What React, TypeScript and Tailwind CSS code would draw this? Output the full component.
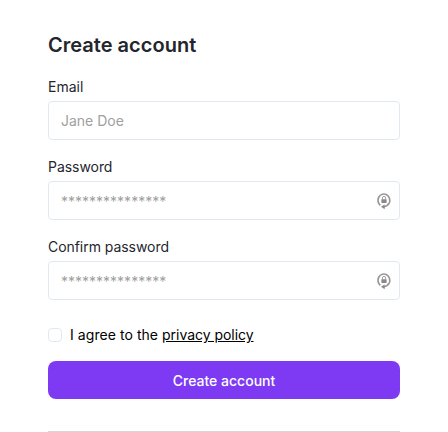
import React from "react";

function KeeperIcon() {
  return (
    <svg viewBox="0 0 16 18" className="h-[18px] w-4" fill="none">
      <path d="M4.4 13.4A5.9 6.3 0 1 1 13.3 10.8Q12 13.8 7.6 14.8" stroke="#999999" strokeWidth="1.7" />
      <path d="M8.6 12.4v4.8L5 14.8z" fill="#8a8a8a" />
      <path d="M6.4 7.4V6a1.6 1.6 0 0 1 3.2 0v1.4" stroke="#a0a0a0" strokeWidth="1" />
      <rect x="5.4" y="7.2" width="5.2" height="3.8" rx="0.4" fill="#888888" />
    </svg>
  );
}

type FieldProps = {
  label: string;
  type: string;
  placeholder: string;
  icon?: boolean;
};

function Field({ label, type, placeholder, icon }: FieldProps) {
  return (
    <label className="block text-[14px] leading-[21px] text-[#24262d]">
      <span className={icon ? "block tracking-[-0.05px]" : "block"}>{label}</span>
      <span className="mt-1 flex h-[39px] items-center rounded-[4px] border border-[#e2e8f0] bg-white pl-3 pr-[7px]">
        <input
          type={type}
          placeholder={placeholder}
          className={
            icon
              ? "min-w-0 flex-1 bg-transparent pt-0.5 leading-[21px] outline-none placeholder:text-[#a0a0a0]"
              : "min-w-0 flex-1 bg-transparent leading-[21px] outline-none placeholder:text-[#a0a0a0]"
          }
        />
        {icon && <KeeperIcon />}
      </span>
    </label>
  );
}

export default function App() {
  return (
    <main className="h-[432px] overflow-hidden bg-white px-12 pt-8 font-['Inter',sans-serif]">
      <h1 className="mb-4 h-7 text-[20px] font-semibold leading-[26px] tracking-[0.02px] text-[#24262d]">Create account</h1>
      <form className="flex flex-col">
        <div className="flex flex-col gap-4">
          <Field label="Email" type="text" placeholder="Jane Doe" />
          <Field label="Password" type="password" placeholder="***************" icon />
          <Field label="Confirm password" type="password" placeholder="***************" icon />
        </div>
        <label className="mt-6 flex h-[21px] items-center text-[14px] leading-[21px] text-black">
          <input type="checkbox" className="size-[14px] appearance-none rounded-[4px] border border-[#e2e8f0]" />
          <span className="ml-2 tracking-[0.06px]">
            I agree to the <span className="tracking-[-0.04px] underline">privacy policy</span>
          </span>
        </label>
        <button
          type="button"
          className="mt-4 h-[38px] rounded-lg bg-[#7e3af2] pt-0.5 text-[14px] font-medium leading-5 text-white"
        >
          Create account
        </button>
      </form>
      <hr className="mt-8 border-[#d5d6d7]" />
    </main>
  );
}
